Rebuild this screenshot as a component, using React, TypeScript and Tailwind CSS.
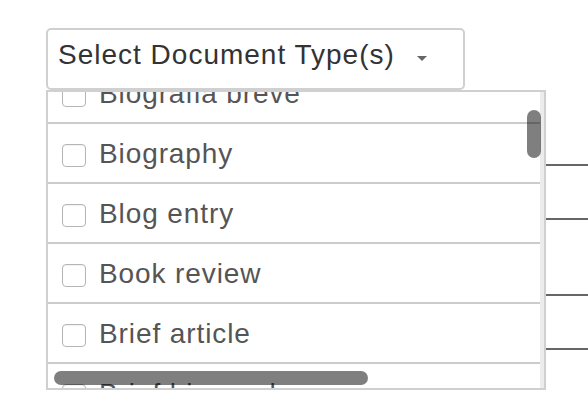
import React, { useLayoutEffect, useRef } from 'react';

const docTypes = [
    'Biografia breve',
    'Biography',
    'Blog entry',
    'Book review',
    'Brief article',
    'Brief biography',
    'Case study',
    'Catalog',
];

const bgRows = [76, 54, 76, 54, 76];

const App: React.FC = () => {
    const listRef = useRef<HTMLDivElement>(null);

    useLayoutEffect(() => {
        if (listRef.current) listRef.current.scrollTop = 28;
    }, []);

    return (
        <div className="w-[588px] h-[416px] overflow-hidden bg-white font-['Liberation_Sans',Arial,sans-serif]">
            <div className="pl-[46px] pt-[28px]">
                {/* select toggle */}
                <button className="flex items-start w-[419px] h-[62px] pl-[10px] pt-[10px] border-2 border-[#d0d0d0] rounded-[5px] bg-white text-left">
                    <span className="text-[28px] leading-[30px] tracking-[1px] text-[#333] whitespace-nowrap">Select Document Type(s)</span>
                    <span className="mt-[16px] ml-[22px] w-0 h-0 border-x-[5px] border-x-transparent border-t-[5px] border-t-[#666]" />
                </button>

                <div className="relative">
                    {/* table behind the menu */}
                    <div className="w-[600px]">
                        {bgRows.map((h, i) => (
                            <div key={i} className="border-b-2 border-[#666]" style={{ height: h }} />
                        ))}
                    </div>

                    {/* dropdown menu */}
                    <div className="absolute top-0 left-0 w-[500px] h-[300px] border-2 border-[#d0d0d0] bg-white flex">
                        <div ref={listRef} className="flex-1 overflow-hidden">
                            {docTypes.map((t) => (
                                <div key={t} className="h-[60px] border-b-2 border-[#ccc] flex items-start pl-[14px] gap-[13px] whitespace-nowrap">
                                    <span className="mt-[20px] w-[24px] h-[23px] shrink-0 rounded-[4px] border border-[#b5b5b5] bg-white shadow-[inset_0_1px_1px_rgba(0,0,0,0.06)]" />
                                    <span className="mt-[15px] text-[28px] leading-[30px] tracking-[0.9px] text-[#555]">{t}</span>
                                </div>
                            ))}
                        </div>
                        <div className="w-[4px] bg-[#ececec]" />

                        {/* overlay scrollbars */}
                        <div className="absolute right-[3px] top-[18px] w-[14px] h-[48px] rounded-full bg-black/50" />
                        <div className="absolute left-[6px] bottom-[3px] w-[314px] h-[14px] rounded-full bg-black/50" />
                    </div>
                </div>
            </div>
        </div>
    );
};

export default App;
